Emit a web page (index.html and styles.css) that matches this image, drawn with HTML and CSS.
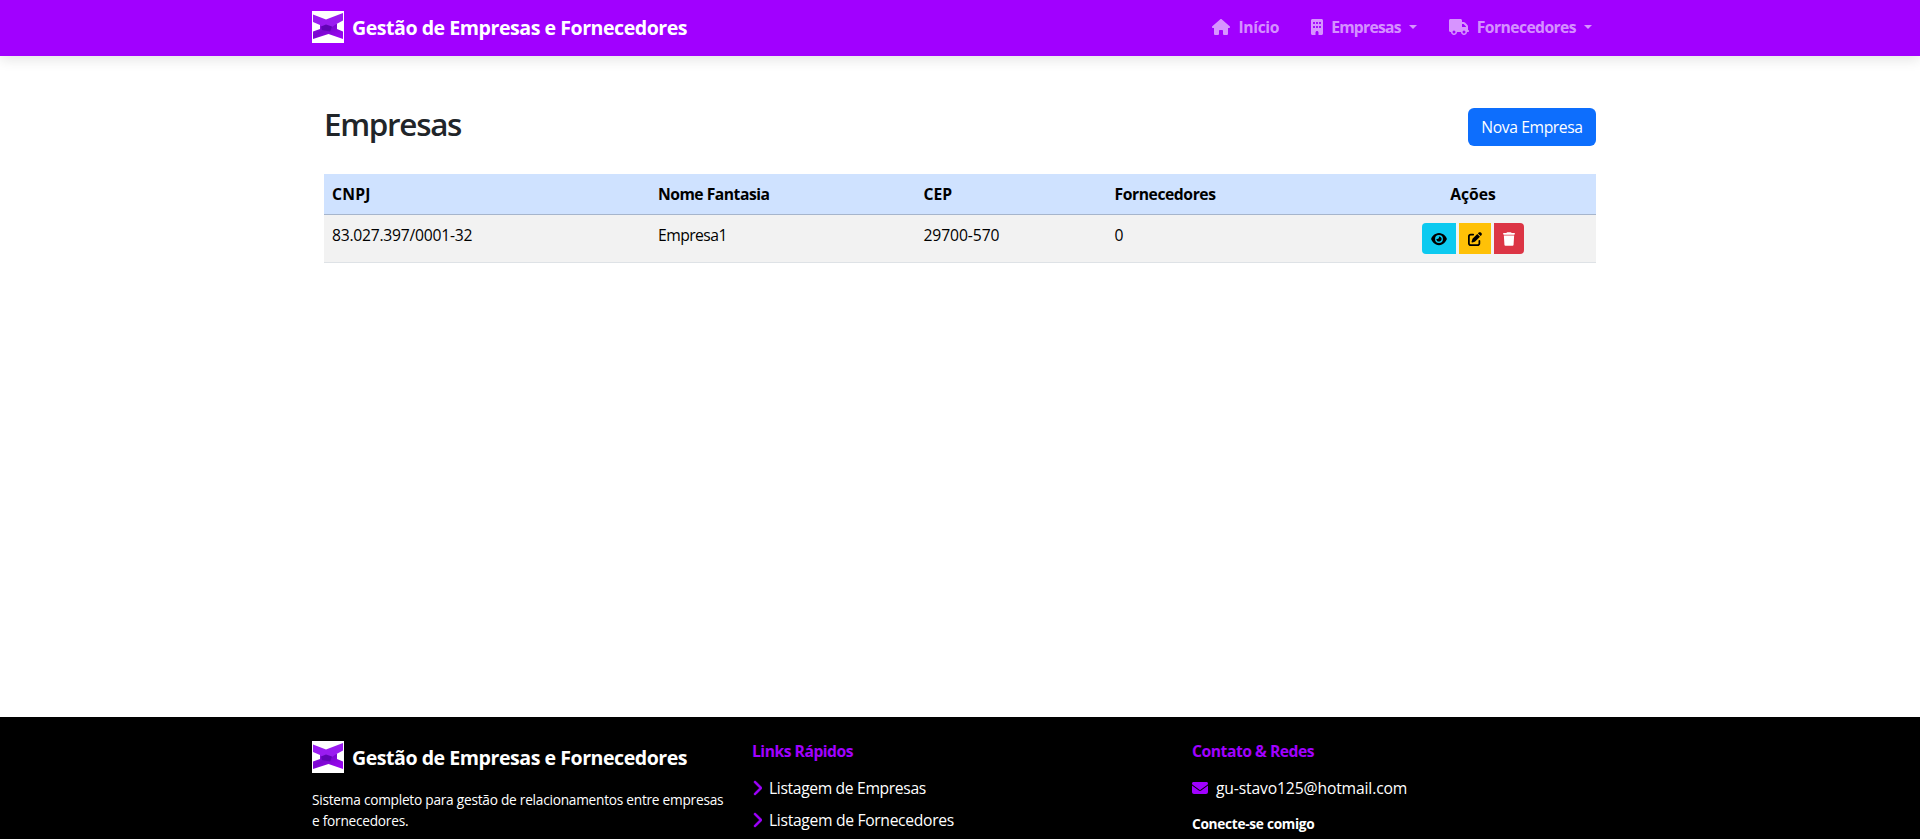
FILE: index.html
```html
<!DOCTYPE html>
<html lang="pt-BR">
<head>
<meta charset="utf-8">
<title>Gestão de Empresas e Fornecedores</title>
<link rel="stylesheet" href="styles.css">
</head>
<body>
<svg class="defs" width="0" height="0">
  <defs>
    <linearGradient id="lower" x1="0" y1="0" x2="1" y2="1">
      <stop offset="0" stop-color="#9a14ee"/><stop offset=".4" stop-color="#7a06cf"/><stop offset=".75" stop-color="#9308e8"/><stop offset="1" stop-color="#a200ff"/>
    </linearGradient>
    <symbol id="logo" viewBox="0 0 32 32">
      <rect width="32" height="32" fill="#fff"/>
      <path d="M8 13 H25 V18 L31 20.500 V28 L16.500 23 L1 28 V20.500 L8 18Z" fill="url(#lower)"/>
      <path d="M1 3.500 L14 8.500 L31 2 V9.500 L24.500 13 L20 16 L9 15.500 L8 14 L1 11Z" fill="#9a1cf0"/>
      <path d="M9 15.500 L14 13.500 L20 15.500 L18 20.500 L10 19Z" fill="#6104b4"/>
    </symbol>
  </defs>
</svg>
<header class="navbar">
  <div class="container navbar-row">
    <a class="brand"><svg class="logo"><use href="#logo"/></svg><span>Gestão de Empresas e Fornecedores</span></a>
    <nav class="menu">
      <a class="nav-link"><svg class="ico home" viewBox="0 0 576 512"><path d="M575.800 255.500c0 18-15 32.100-32 32.100h-32l.7 160.200c0 2.700-.2 5.400-.5 8.100V472c0 22.100-17.900 40-40 40H456c-1.100 0-2.200 0-3.300-.1c-1.400 .1-2.800 .1-4.200 .1H416 392c-22.100 0-40-17.900-40-40V448 384c0-17.700-14.300-32-32-32H256c-17.700 0-32 14.300-32 32v64 24c0 22.100-17.900 40-40 40H160 128.100c-1.500 0-3-.1-4.500-.2c-1.200 .1-2.400 .2-3.600 .2H104c-22.100 0-40-17.900-40-40V360c0-.9 0-1.900 .1-2.800V287.600H32c-18 0-32-14-32-32.100c0-9 3-17 10-24L266.400 8c7-7 15-8 22-8s15 2 21 7L564.800 231.500c8 7 12 15 11 24z"/></svg><span class="t-inicio">Início</span></a>
      <a class="nav-link"><svg class="ico building" viewBox="0 0 384 512"><path fill-rule="evenodd" d="M48 0C21.500 0 0 21.500 0 48V464c0 26.500 21.500 48 48 48h96V432c0-26.500 21.500-48 48-48s48 21.500 48 48v80h96c26.500 0 48-21.500 48-48V48c0-26.500-21.500-48-48-48H48zM64 240c0-8.800 7.200-16 16-16h32c8.800 0 16 7.200 16 16v32c0 8.800-7.200 16-16 16H80c-8.800 0-16-7.200-16-16V240zm112-16h32c8.800 0 16 7.200 16 16v32c0 8.800-7.200 16-16 16H176c-8.800 0-16-7.200-16-16V240c0-8.800 7.200-16 16-16zm80 16c0-8.800 7.200-16 16-16h32c8.800 0 16 7.200 16 16v32c0 8.800-7.200 16-16 16H272c-8.800 0-16-7.200-16-16V240zM80 96h32c8.800 0 16 7.200 16 16v32c0 8.800-7.200 16-16 16H80c-8.800 0-16-7.200-16-16V112c0-8.800 7.200-16 16-16zm80 16c0-8.800 7.200-16 16-16h32c8.800 0 16 7.200 16 16v32c0 8.800-7.200 16-16 16H176c-8.800 0-16-7.200-16-16V112zM272 96h32c8.800 0 16 7.200 16 16v32c0 8.800-7.200 16-16 16H272c-8.800 0-16-7.200-16-16V112c0-8.800 7.200-16 16-16z"/></svg><span class="t-emp">Empresas</span><i class="caret"></i></a>
      <a class="nav-link"><svg class="ico truck" viewBox="0 0 640 512"><path fill-rule="evenodd" d="M48 0C21.500 0 0 21.500 0 48V368c0 26.500 21.500 48 48 48H64c0 53 43 96 96 96s96-43 96-96H384c0 53 43 96 96 96s96-43 96-96h32c17.700 0 32-14.300 32-32s-14.300-32-32-32V288 256 237.300c0-17-6.700-33.300-18.700-45.300L512 114.700c-12-12-28.300-18.700-45.300-18.700H416V48c0-26.500-21.500-48-48-48H48zM416 160h50.700L544 237.300V256H416V160zM112 416a48 48 0 1 1 96 0 48 48 0 1 1 -96 0zm368-48a48 48 0 1 1 0 96 48 48 0 1 1 0-96z"/></svg><span class="t-forn">Fornecedores</span><i class="caret"></i></a>
    </nav>
  </div>
</header>
<main class="content">
  <div class="page-head">
    <h1>Empresas</h1>
    <button class="btn-new">Nova Empresa</button>
  </div>
  <table>
    <colgroup><col class="c1"><col class="c2"><col class="c3"><col class="c4"><col></colgroup>
    <thead><tr><th class="h-cnpj">CNPJ</th><th class="h-nome">Nome Fantasia</th><th>CEP</th><th class="h-forn">Fornecedores</th><th class="center">Ações</th></tr></thead>
    <tbody><tr>
      <td class="d-cnpj">83.027.397/0001-32</td><td class="d-nome">Empresa1</td><td class="d-cep">29700-570</td><td>0</td>
      <td class="actions"><div class="group">
        <button class="act view"><svg class="ico a-eye" viewBox="0 0 576 512"><path fill-rule="evenodd" d="M288 32c-80.800 0-145.500 36.800-192.600 80.600C48.600 156 17.300 208 2.500 243.700c-3.300 7.900-3.300 16.700 0 24.600C17.300 304 48.600 356 95.400 399.400C142.500 443.200 207.200 480 288 480s145.500-36.800 192.600-80.600c46.800-43.500 78.100-95.400 93-131.100c3.300-7.900 3.300-16.700 0-24.600c-14.900-35.700-46.200-87.700-93-131.100C433.500 68.800 368.800 32 288 32zM144 256a144 144 0 1 1 288 0 144 144 0 1 1 -288 0zm144-64c0 35.300-28.700 64-64 64c-7.100 0-13.900-1.200-20.300-3.300c-5.500-1.800-11.900 1.600-11.700 7.400c.3 6.900 1.300 13.800 3.200 20.700c13.700 51.200 66.400 81.600 117.600 67.900s81.600-66.400 67.900-117.600c-11.100-41.500-47.800-69.400-88.600-71.100c-5.800-.2-9.200 6.100-7.400 11.700c2.100 6.400 3.300 13.200 3.300 20.300z"/></svg></button>
        <button class="act edit"><svg class="ico a-pen" viewBox="0 0 512 512"><path d="M471.600 21.700c-21.900-21.900-57.300-21.900-79.200 0L362.300 51.700l97.900 97.900 30.100-30.100c21.900-21.900 21.900-57.300 0-79.200L471.600 21.700zm-299.200 220c-6.100 6.100-10.800 13.600-13.500 21.900l-29.600 88.800c-2.900 8.600-.6 18.100 5.800 24.600s15.900 8.700 24.600 5.800l88.800-29.600c8.200-2.700 15.700-7.400 21.900-13.500L437.700 172.300 339.700 74.300 172.400 241.700zM96 64C43 64 0 107 0 160V416c0 53 43 96 96 96H352c53 0 96-43 96-96V320c0-17.700-14.300-32-32-32s-32 14.300-32 32v96c0 17.700-14.300 32-32 32H96c-17.700 0-32-14.300-32-32V160c0-17.700 14.300-32 32-32h96c17.700 0 32-14.300 32-32s-14.300-32-32-32H96z"/></svg></button>
        <button class="act del"><svg class="ico a-trash" viewBox="0 0 448 512"><path d="M135.200 17.700L128 32H32C14.300 32 0 46.300 0 64S14.300 96 32 96H416c17.700 0 32-14.300 32-32s-14.300-32-32-32H320l-7.200-14.300C307.400 6.800 296.300 0 284.200 0H163.800c-12.100 0-23.200 6.800-28.600 17.700zM416 128H32L53.200 467c1.600 25.300 22.600 45 47.900 45H346.900c25.300 0 46.300-19.700 47.900-45L416 128z"/></svg></button>
      </div></td>
    </tr></tbody>
  </table>
</main>
<footer class="footer">
  <div class="container footer-grid">
    <section>
      <a class="brand"><svg class="logo"><use href="#logo"/></svg><span>Gestão de Empresas e Fornecedores</span></a>
      <p class="about">Sistema completo para gestão de relacionamentos entre empresas<br>e fornecedores.</p>
    </section>
    <section>
      <h2 class="f-links">Links Rápidos</h2>
      <a class="f-item"><svg class="ico chev" viewBox="0 0 320 512"><path d="M310.600 233.400c12.500 12.500 12.500 32.800 0 45.300l-192 192c-12.500 12.500-32.800 12.500-45.300 0s-12.500-32.800 0-45.300L242.700 256 73.400 86.600c-12.500-12.500-12.500-32.800 0-45.300s32.800-12.500 45.300 0l192 192z"/></svg><span class="t-list">Listagem de Empresas</span></a>
      <a class="f-item"><svg class="ico chev" viewBox="0 0 320 512"><path d="M310.600 233.400c12.500 12.500 12.500 32.800 0 45.300l-192 192c-12.500 12.500-32.800 12.500-45.300 0s-12.500-32.800 0-45.300L242.700 256 73.400 86.600c-12.500-12.500-12.500-32.800 0-45.300s32.800-12.500 45.300 0l192 192z"/></svg><span class="t-list2">Listagem de Fornecedores</span></a>
    </section>
    <section>
      <h2 class="f-contact">Contato &amp; Redes</h2>
      <a class="f-item"><svg class="ico mail" viewBox="0 0 512 512"><path d="M48 64C21.500 64 0 85.500 0 112c0 15.100 7.100 29.300 19.200 38.400L236.800 313.600c11.400 8.500 27 8.500 38.400 0L492.800 150.400c12.100-9.100 19.200-23.300 19.200-38.400c0-26.500-21.500-48-48-48H48zM0 176V384c0 35.300 28.700 64 64 64H448c35.300 0 64-28.700 64-64V176L294.400 339.200c-22.800 17.100-54 17.100-76.800 0L0 176z"/></svg><span class="t-mail">gu-stavo125@hotmail.com</span></a>
      <h3>Conecte-se comigo</h3>
    </section>
  </div>
</footer>
</body>
</html>
```
FILE: styles.css
```css
* { box-sizing: border-box; }
html, body { height: 100%; }
body {
  margin: 0;
  display: flex;
  flex-direction: column;
  overflow: hidden;
  background: #fff;
  color: #212529;
  font-family: "Segoe UI", "Open Sans", "Noto Sans", sans-serif;
  font-size: 15.7px;
  line-height: 24px;
}
.defs { position: absolute; }
h1, h2, h3, p { margin: 0; }
button { font: inherit; border: 0; padding: 0; }
.ico { fill: currentColor; flex: none; display: block; }
.container { width: 1296px; margin: 0 auto; }

.navbar {
  flex: none;
  height: 56px;
  background: #a100ff;
  box-shadow: 0 4px 12px rgba(0, 0, 0, .1);
}
.navbar-row { height: 56px; display: flex; justify-content: space-between; padding-top: 11px; }
.brand {
  display: flex;
  gap: 8px;
  height: 32px;
  color: #fff;
  font-size: 19.6px;
  font-weight: 700;
  line-height: 34px;
  letter-spacing: -.48px;
  white-space: nowrap;
}
.logo { width: 32px; height: 32px; }

.menu { display: flex; gap: 32px; padding-right: 16px; }
.nav-link {
  display: flex;
  height: 32px;
  color: rgba(255, 255, 255, .58);
  font-weight: 700;
  line-height: 33px;
}
.nav-link .ico { margin-top: 8px; }
.home { width: 18px; height: 16px; margin-right: 8px; }
.building { width: 12px; height: 16px; margin-right: 8px; }
.truck { width: 20px; height: 16px; margin-right: 8px; }
.t-inicio { letter-spacing: -.35px; }
.t-emp { letter-spacing: -.75px; }
.t-forn { letter-spacing: -.58px; }
.caret {
  width: 8px;
  height: 4px;
  margin: 14px 0 0 8px;
  border: 4px solid transparent;
  border-top-color: currentColor;
  border-bottom: 0;
}

.content { flex: none; width: 1272px; height: 661px; margin: 0 auto; padding-top: 52px; }
.page-head { display: flex; justify-content: space-between; height: 66px; }
h1 { font-size: 31.4px; font-weight: 600; line-height: 32px; letter-spacing: -1.3px; }
.btn-new {
  width: 128px;
  height: 38px;
  border-radius: 6px;
  background: #0d6efd;
  color: #fff;
  letter-spacing: -.4px;
}
table { width: 1272px; table-layout: fixed; border-collapse: separate; border-spacing: 0; color: #000; }
.c1 { width: 326px; }
.c2 { width: 265.500px; }
.c3 { width: 191px; }
.c4 { width: 243.500px; }
th, td { padding: 8px; text-align: left; vertical-align: top; }
th { height: 41px; background: #cfe2ff; border-bottom: 1px solid #a6b5cc; font-weight: 700; }
td { height: 48px; background: #f2f2f2; border-bottom: 1px solid #dee2e6; }
.h-cnpj { letter-spacing: .2px; }
.h-nome { letter-spacing: -.5px; }
.h-forn { letter-spacing: -.43px; }
.d-cnpj { letter-spacing: -.25px; }
.d-nome { letter-spacing: -.55px; }
.d-cep { letter-spacing: -.1px; }
.center { text-align: center; }
.group { display: flex; justify-content: center; gap: 3px; }
.act { height: 31px; display: flex; align-items: center; justify-content: center; color: #000; }
.view { width: 34px; background: #0dcaf0; border-radius: 4px 0 0 4px; }
.edit { width: 32px; background: #ffc107; }
.del { width: 30px; background: #dc3545; color: #fff; border-radius: 0 4px 4px 0; }
.a-eye { width: 16px; height: 14px; }
.a-pen { width: 14px; height: 14px; }
.a-trash { width: 12px; height: 14px; }

.footer { flex: none; height: 122px; overflow: hidden; background: #000; color: #fff; padding-top: 24px; }
.footer-grid { display: grid; grid-template-columns: 440px 440px 416px; }
.about {
  margin-top: 16px;
  font-size: 13.7px;
  line-height: 21px;
  letter-spacing: -.25px;
  white-space: nowrap;
}
h2 { font-size: 15.7px; font-weight: 700; line-height: 21px; color: #a100ff; margin-bottom: 14px; }
.f-links { letter-spacing: -.5px; }
.f-contact { letter-spacing: -.48px; }
.f-item { display: flex; height: 24px; margin-bottom: 8px; }
.f-item .ico { color: #a100ff; margin-top: 4px; }
.chev { width: 10px; height: 16px; margin-right: 7px; stroke: currentColor; stroke-width: 20px; }
.mail { width: 16px; height: 16px; margin-right: 8px; }
.t-list { letter-spacing: -.36px; }
.t-list2 { letter-spacing: -.33px; }
.t-mail { letter-spacing: -.15px; }
h3 { font-size: 13.7px; font-weight: 700; line-height: 21px; margin-top: 13px; letter-spacing: -.3px; }
```
